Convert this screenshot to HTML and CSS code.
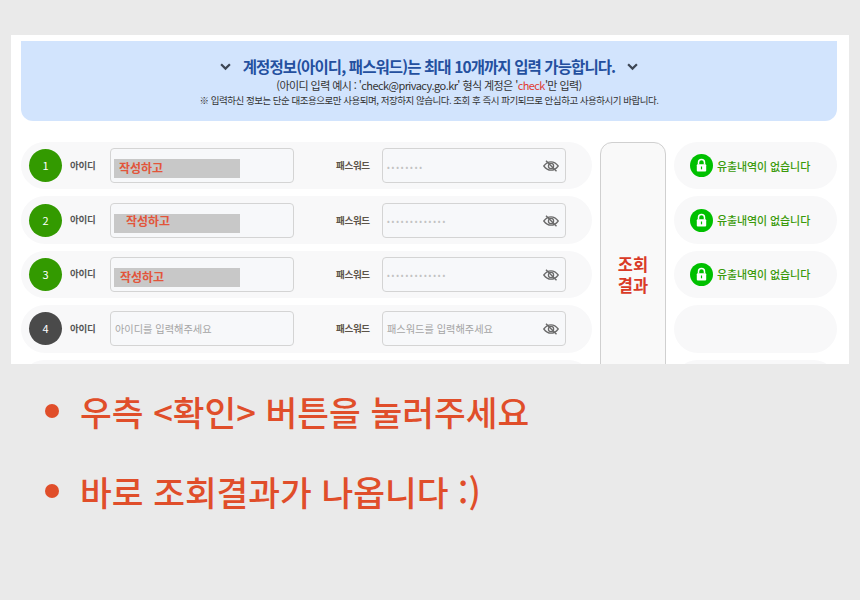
FILE: index.html
```html
<!DOCTYPE html>
<html lang="ko">
<head>
    <meta charset="UTF-8">
    <title>조회결과 안내</title>
    <link rel="stylesheet" href="styles.css">
</head>
<body>
    <svg class="defs" width="0" height="0">
        <symbol id="eye" viewBox="0 0 16 12">
            <path d="M.8 6C3 3 5.300 1.800 8 1.800S13 3 15.200 6C13 9 10.700 10.200 8 10.200S3 9 .8 6Z" fill="none" stroke="currentColor" stroke-width="1.300"/>
            <circle cx="8" cy="6" r="2.600" fill="none" stroke="currentColor" stroke-width="1.300"/>
            <path d="M3 .8 13.500 11.200" stroke="currentColor" stroke-width="1.400"/>
        </symbol>
        <symbol id="lock" viewBox="0 0 23 23">
            <circle cx="11.500" cy="11.500" r="11.500" fill="#00c000"/>
            <path d="M8.500 10.500V8.500a3 3 0 0 1 6 0v2" fill="none" stroke="#fff" stroke-width="1.500"/>
            <rect x="6.800" y="10.200" width="9.400" height="7.300" rx="1" fill="#fff"/>
            <rect x="10.900" y="12.500" width="1.200" height="2.800" fill="#00c000"/>
        </symbol>
    </svg>

    <div class="panel">
        <div class="banner">
            <h2>
                <svg class="chev" viewBox="0 0 10 7"><path d="M1 1l4 4 4-4" fill="none" stroke="#3d4654" stroke-width="2"/></svg>
                <span>계정정보(아이디, 패스워드)는 최대 10개까지 입력 가능합니다.</span>
                <svg class="chev" viewBox="0 0 10 7"><path d="M1 1l4 4 4-4" fill="none" stroke="#3d4654" stroke-width="2"/></svg>
            </h2>
            <p class="example">(아이디 입력 예시 : 'check@privacy.go.kr' 형식 계정은 '<em>check</em>'만 입력)</p>
            <p class="notice">※ 입력하신 정보는 단순 대조용으로만 사용되며, 저장하지 않습니다. 조회 후 즉시 파기되므로 안심하고 사용하시기 바랍니다.</p>
        </div>

        <div class="lookup">
            <div class="rows">
                <div class="row">
                    <span class="num done">1</span>
                    <span class="lbl">아이디</span>
                    <div class="field"><span class="mask">작성하고</span></div>
                    <span class="lbl pw">패스워드</span>
                    <div class="field"><span class="dots">••••••••</span><svg class="eye"><use href="#eye"/></svg></div>
                </div>
                <div class="row">
                    <span class="num done">2</span>
                    <span class="lbl">아이디</span>
                    <div class="field"><span class="mask indent">작성하고</span></div>
                    <span class="lbl pw">패스워드</span>
                    <div class="field"><span class="dots">•••••••••••••</span><svg class="eye"><use href="#eye"/></svg></div>
                </div>
                <div class="row">
                    <span class="num done">3</span>
                    <span class="lbl">아이디</span>
                    <div class="field"><span class="mask third">작성하고</span></div>
                    <span class="lbl pw">패스워드</span>
                    <div class="field"><span class="dots">•••••••••••••</span><svg class="eye"><use href="#eye"/></svg></div>
                </div>
                <div class="row">
                    <span class="num">4</span>
                    <span class="lbl">아이디</span>
                    <div class="field"><span class="hint">아이디를 입력해주세요</span></div>
                    <span class="lbl pw">패스워드</span>
                    <div class="field"><span class="hint">패스워드를 입력해주세요</span><svg class="eye"><use href="#eye"/></svg></div>
                </div>
                <div class="row"></div>
            </div>

            <button class="check">조회<br>결과</button>

            <div class="results">
                <div class="result"><svg class="lock"><use href="#lock"/></svg>유출내역이 없습니다</div>
                <div class="result"><svg class="lock"><use href="#lock"/></svg>유출내역이 없습니다</div>
                <div class="result"><svg class="lock"><use href="#lock"/></svg>유출내역이 없습니다</div>
                <div class="result"></div>
                <div class="result"></div>
            </div>
        </div>
    </div>

    <ul class="guide">
        <li>우측 &lt;확인&gt; 버튼을 눌러주세요</li>
        <li>바로 조회결과가 나옵니다 :)</li>
    </ul>
</body>
</html>
```

FILE: styles.css
```css
body {
    margin: 0;
    height: 600px;
    overflow: hidden;
    background-color: #eaeaea;
    font-family: "Noto Sans CJK KR", "Noto Sans", sans-serif;
}

.defs {
    display: block;
}

.panel {
    box-sizing: border-box;
    width: 838px;
    height: 329px;
    margin: 35px 0 0 11px;
    padding: 6px 12px 0 10px;
    background-color: #ffffff;
    overflow: hidden;
}

.banner {
    height: 80px;
    box-sizing: border-box;
    padding-top: 14px;
    background-color: #d2e4fd;
    border-radius: 0 0 12px 12px;
    text-align: center;
}

.banner h2 {
    display: flex;
    justify-content: center;
    align-items: center;
    gap: 12px;
    margin: 0;
    font-size: 15.500px;
    font-weight: 700;
    line-height: 22px;
    letter-spacing: -0.900px;
    color: #24509f;
}

.chev {
    width: 11px;
    height: 8px;
    margin-top: 1px;
}

.banner p {
    margin: 0;
    color: #333333;
}

.example {
    font-size: 11px;
    line-height: 16px;
    letter-spacing: -0.570px;
}

.example em {
    font-style: normal;
    color: #e0392f;
}

.notice {
    font-size: 9.500px;
    line-height: 14px;
    letter-spacing: -0.480px;
}

.lookup {
    display: flex;
    margin-top: 21px;
    height: 265px;
}

.rows,
.results {
    display: flex;
    flex-direction: column;
    gap: 7px;
}

.rows {
    width: 571px;
}

.results {
    width: 163px;
}

.row,
.result {
    flex: none;
    height: 47.400px;
    background-color: #f8f8f9;
    border-radius: 24px;
    display: flex;
    align-items: center;
}

.num {
    flex: none;
    width: 33px;
    height: 33px;
    margin-left: 8px;
    border-radius: 50%;
    background-color: #4a4a4a;
    color: #ffffff;
    font-size: 11px;
    line-height: 33px;
    text-align: center;
}

.num.done {
    background-color: #339a00;
}

.lbl {
    flex: none;
    width: 40px;
    margin-left: 8px;
    margin-top: -2px;
    font-size: 9.500px;
    font-weight: 700;
    color: #555555;
    letter-spacing: -0.300px;
}

.lbl.pw {
    width: 46px;
    margin-left: 42px;
    margin-top: -1px;
    color: #5c5348;
}

.field {
    flex: none;
    box-sizing: border-box;
    width: 184px;
    height: 35px;
    padding: 6px 6px 0 3px;
    display: flex;
    align-items: center;
    justify-content: space-between;
    background-color: #f7f8fa;
    border: 1px solid #d4d4d4;
    border-radius: 4px;
}

.mask {
    width: 126px;
    height: 19px;
    padding-left: 5px;
    box-sizing: border-box;
    background-color: #c8c8c8;
    color: #e2553a;
    font-size: 12px;
    font-weight: 700;
    line-height: 18px;
}

.mask.indent {
    padding-left: 12px;
    line-height: 14px;
}

.mask.third {
    padding-left: 6px;
    line-height: 17px;
}

.dots {
    margin-left: 1px;
    margin-top: -5px;
    color: #c2c2c2;
    font-size: 8px;
    letter-spacing: 1.900px;
}

.hint {
    margin-left: 1px;
    margin-top: -7px;
    color: #a5a5a5;
    font-size: 10.200px;
}

.eye {
    width: 16px;
    height: 12px;
    margin-top: -5px;
    color: #6a6a6a;
}

.check {
    flex: none;
    width: 66px;
    height: 265px;
    margin: 0 8px;
    padding: 0;
    background-color: #f9f9f9;
    border: 1px solid #d0d0d0;
    border-radius: 12px;
    color: #d93a26;
    font-family: inherit;
    font-size: 16.500px;
    font-weight: 700;
    line-height: 21px;
}

.result {
    font-size: 11px;
    font-weight: 500;
    color: #3a9a0a;
    letter-spacing: -0.100px;
}

.lock {
    width: 23px;
    height: 23px;
    margin: 0 4px 0 16px;
}

.guide {
    list-style: none;
    margin: 20px 0 0 45px;
    padding: 0;
}

.guide li {
    display: flex;
    align-items: center;
    height: 54px;
    margin-bottom: 26px;
    font-size: 34.500px;
    font-weight: 500;
    color: #e04e2a;
}

.guide li::before {
    content: "";
    width: 14px;
    height: 14px;
    margin-right: 21px;
    border-radius: 50%;
    background-color: #e04e2a;
}
```
